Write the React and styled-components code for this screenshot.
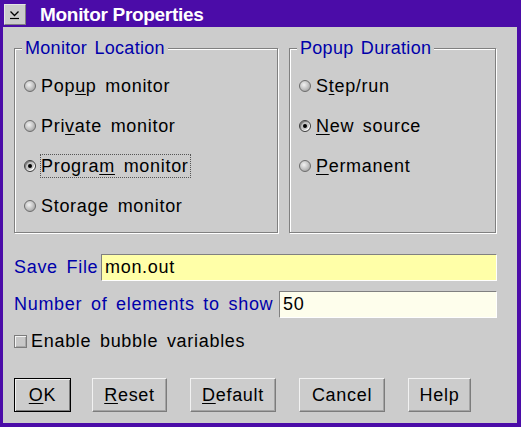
import styled, { createGlobalStyle, css } from 'styled-components';

const GlobalStyle = createGlobalStyle`
  html, body {
    margin: 0;
    padding: 0;
    background: #cccccc;
  }
  body {
    font-family: "Liberation Sans", Arial, sans-serif;
  }
`;

const Window = styled.div`
  width: 521px;
  height: 427px;
  box-sizing: border-box;
  background: #4b0ca8;
  display: flex;
  flex-direction: column;
`;

const TitleBar = styled.div`
  height: 27px;
  box-sizing: border-box;
  padding: 2px 0 0 4px;
  display: flex;
  align-items: center;
`;

const MenuButton = styled.div`
  width: 22px;
  height: 21px;
  box-sizing: border-box;
  background: #cccccc;
  border: 1px solid;
  border-color: #e4e4e4 #808080 #808080 #e4e4e4;
  display: flex;
  align-items: center;
  justify-content: center;
`;

const Title = styled.span`
  margin-left: 14px;
  color: #ffffff;
  font-size: 19px;
  font-weight: bold;
  line-height: 20px;
  letter-spacing: -0.3px;
`;

const Body = styled.div`
  flex: 1;
  margin: 0 4px 4px 3px;
  background: #cccccc;
  padding: 11px 20px 11px 11px;
  display: flex;
  flex-direction: column;
`;

const Groups = styled.div`
  display: flex;
  gap: 11px;
`;

const Group = styled.fieldset`
  margin: 0;
  min-width: 0;
  width: ${p => p.$width}px;
  height: 195px;
  box-sizing: border-box;
  padding: 8px 8px 6px 9px;
  border: 1px solid #808080;
  box-shadow: inset 1px 1px 0 #ffffff, 1px 1px 0 #ffffff;
`;

const Legend = styled.legend`
  padding: 0 3px;
  margin-left: -2px;
  background: #cccccc;
  color: #0000aa;
  font-size: 18px;
  line-height: 20px;
  letter-spacing: 0.3px;
  word-spacing: 2px;
`;

const Option = styled.label`
  display: flex;
  align-items: center;
  height: 40px;
  font-size: 18px;
  letter-spacing: 0.7px;
  word-spacing: 3px;
  color: #000000;
`;

const Radio = styled.span`
  position: relative;
  width: 12px;
  height: 12px;
  box-sizing: border-box;
  border-radius: 50%;
  margin-right: 4px;
  flex: none;
  border: 1px solid #6c6c6c;
  background: radial-gradient(circle at 40% 38%, #f2f2f2 0, #c8c8c8 45%, #909090 100%);

  ${p => p.$checked && css`
    border-color: #404040;
    background: #c4c4c4;
    box-shadow: inset -1px -1px 0 #ffffff, inset 1px 1px 0 #808080;

    &::after {
      content: '';
      position: absolute;
      left: 3px;
      top: 3px;
      width: 4px;
      height: 4px;
      border-radius: 50%;
      background: #000000;
    }
  `}
`;

const OptionText = styled.span`
  line-height: 22px;
  padding-right: 1px;
  border: 1px dotted ${p => (p.$focused ? '#555555' : 'transparent')};
`;

const Key = styled.u`
  text-decoration-thickness: 1px;
  text-underline-offset: 2px;
`;

const Field = styled.div`
  display: flex;
  align-items: center;
  height: 27px;
  margin-top: ${p => p.$top}px;
`;

const FieldLabel = styled.span`
  flex: 1;
  color: #0000aa;
  font-size: 18px;
  letter-spacing: 0.7px;
  word-spacing: 3px;
  white-space: nowrap;
`;

const Input = styled.input`
  width: ${p => p.$width}px;
  height: 27px;
  box-sizing: border-box;
  border: 1px solid;
  border-color: #808080 #ffffff #ffffff #808080;
  background: ${p => p.$bg};
  padding: 0 3px;
  font-family: "Liberation Sans", Arial, sans-serif;
  font-size: 18px;
  letter-spacing: 0.7px;
  color: #000000;
  outline: none;
`;

const CheckRow = styled.label`
  display: flex;
  align-items: center;
  height: 20px;
  margin-top: 13px;
  font-size: 18px;
  letter-spacing: 0.7px;
  word-spacing: 3px;
`;

const CheckBox = styled.span`
  width: 13px;
  height: 13px;
  box-sizing: border-box;
  margin-right: 4px;
  border: 1px solid #7c7c7c;
  background: #c8c8c8;
  box-shadow: inset 1px 1px 0 #f4f4f4, inset -1px -1px 0 #a8a8a8;
`;

const Buttons = styled.div`
  display: flex;
  gap: 23px;
  margin-top: 27px;
`;

const Button = styled.button`
  width: ${p => p.$w}px;
  height: 34px;
  box-sizing: border-box;
  padding: 0;
  background: #cccccc;
  color: #000000;
  font-family: "Liberation Sans", Arial, sans-serif;
  font-size: 18px;
  letter-spacing: 0.7px;
  border: 1px solid;
  border-color: #f2f2f2 #7c7c7c #7c7c7c #f2f2f2;
  box-shadow: inset -1px -1px 0 #a4a4a4;

  ${p => p.$default && css`
    margin-right: -2px;
    border-color: #000000;
    box-shadow: inset 1px 1px 0 #f2f2f2, inset -1px -1px 0 #7c7c7c;
  `}
`;

function RadioOption({ checked, focused, children }) {
  return (
    <Option>
      <Radio $checked={checked} />
      <OptionText $focused={focused}>{children}</OptionText>
    </Option>
  );
}

export default function App() {
  return (
    <>
      <GlobalStyle />
      <Window>
        <TitleBar>
          <MenuButton>
            <svg width="20" height="19" viewBox="0 0 20 19">
              <polyline points="5.5,6.5 9.5,10.5 13.5,6.5" fill="none" stroke="#000" strokeWidth="1.3" />
              <line x1="5" y1="13.5" x2="14" y2="13.5" stroke="#000" strokeWidth="1.2" />
            </svg>
          </MenuButton>
          <Title>Monitor Properties</Title>
        </TitleBar>

        <Body>
          <Groups>
            <Group $width={264}>
              <Legend>Monitor Location</Legend>
              <RadioOption>Pop<Key>u</Key>p monitor</RadioOption>
              <RadioOption>Pri<Key>v</Key>ate monitor</RadioOption>
              <RadioOption checked focused>Progra<Key>m</Key> monitor</RadioOption>
              <RadioOption>Storage monitor</RadioOption>
            </Group>
            <Group $width={207}>
              <Legend>Popup Duration</Legend>
              <RadioOption>S<Key>t</Key>ep/run</RadioOption>
              <RadioOption checked><Key>N</Key>ew source</RadioOption>
              <RadioOption><Key>P</Key>ermanent</RadioOption>
            </Group>
          </Groups>

          <Field $top={21}>
            <FieldLabel>Save File</FieldLabel>
            <Input $width={396} $bg="#ffffa8" defaultValue="mon.out" />
          </Field>
          <Field $top={10}>
            <FieldLabel>Number of elements to show</FieldLabel>
            <Input $width={218} $bg="#fefeec" defaultValue="50" />
          </Field>

          <CheckRow>
            <CheckBox />
            Enable bubble variables
          </CheckRow>

          <Buttons>
            <Button $w={57} $default><Key>O</Key>K</Button>
            <Button $w={75}><Key>R</Key>eset</Button>
            <Button $w={86}><Key>D</Key>efault</Button>
            <Button $w={86}>Cancel</Button>
            <Button $w={63}>Help</Button>
          </Buttons>
        </Body>
      </Window>
    </>
  );
}
